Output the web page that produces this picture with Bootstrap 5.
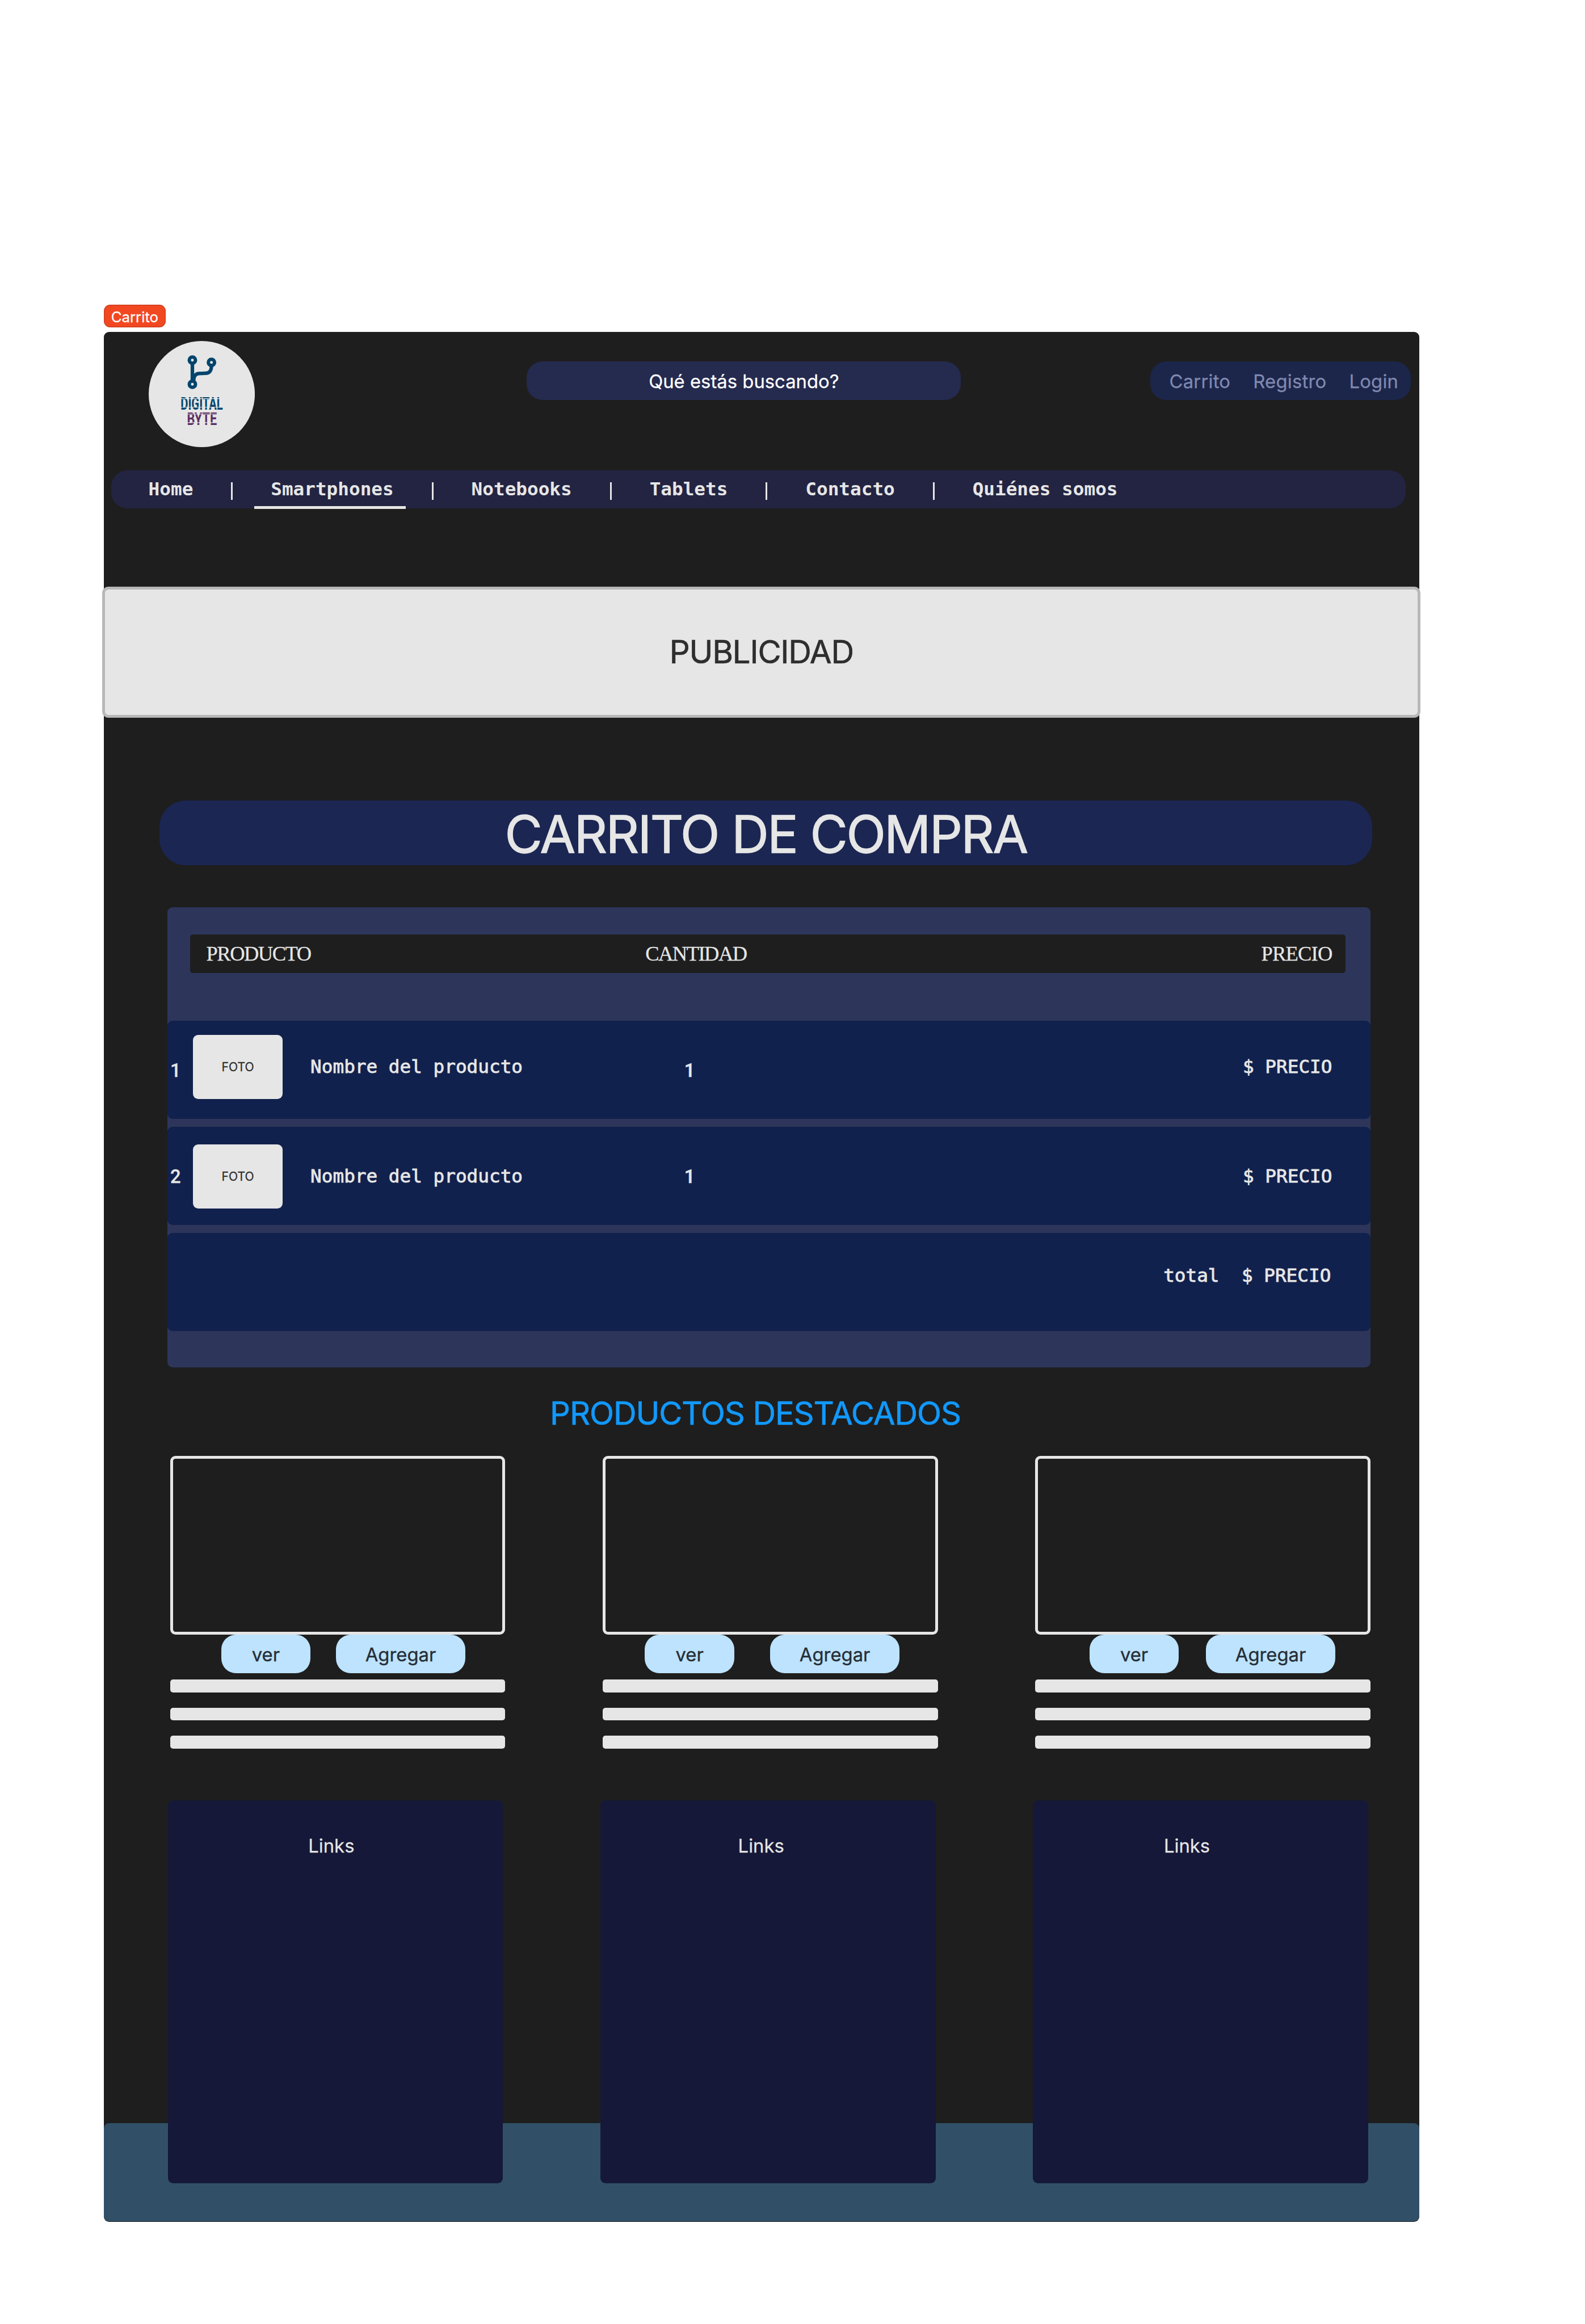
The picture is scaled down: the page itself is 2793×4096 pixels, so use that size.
<!DOCTYPE html>
<html lang="es">
<head>
<meta charset="utf-8">
<title>Carrito</title>
<link rel="stylesheet" href="https://cdn.jsdelivr.net/npm/bootstrap@5.3.0/dist/css/bootstrap.min.css">
<style>
html { font-size: 7.0325px; }
body { font-family: Inter, sans-serif; font-size: 4.667rem; line-height: 1; background: #fff; color: #e6e6e6; overflow: hidden; white-space: nowrap; -webkit-text-stroke: .008em currentColor; }
.mono { font-family: "DejaVu Sans Mono", monospace; font-size: 4.65rem; -webkit-text-stroke: .026em currentColor; white-space: pre; }
.page { padding: 76.4rem 0 0 26rem; }
.frame-tag { width: 15.5rem; height: 5.6rem; font-size: 3.667rem; padding-top: .6rem; border-radius: 1.6rem; background: #f24822; color: #fff; box-shadow: inset 0 0 0 .2rem rgba(0,0,0,.14); margin-bottom: 1.2rem; }
.frame { width: 329.6rem; height: 473.6rem; border-radius: 1.3rem; background: #1e1e1e; }
.topbar { height: 34.65rem; padding: 2.2rem 2.1rem 0 11.2rem; }
.logo { width: 26.6rem; height: 26.6rem; -webkit-text-stroke: 0; }
.pill { height: 9.6rem; border-radius: 4rem; margin-top: 5.2rem; }
.search { width: 108.8rem; margin-left: 68.2rem; padding-top: .3rem; background: #252a4f; color: #fff; }
.account { width: 65.2rem; background: #1c264b; color: #8089b0; padding: .3rem 3.1rem 0 4.7rem; letter-spacing: .03rem; }
.mainnav { height: 9.6rem; margin: 0 3.4rem 0 1.8rem; padding-left: 9.4rem; border-radius: 4rem; background: #232442; }
.mainnav .mono { font-weight: 700; -webkit-text-stroke: 0; }
.mainnav i { width: .45rem; height: 4.4rem; margin: .8rem 9.51rem 0; background: #e6e6e6; }
.current::after { content: ""; position: absolute; left: -4.2rem; right: -3rem; bottom: -2.6rem; height: .8rem; background: #e6e6e6; }
.promo { height: 32.8rem; margin: 19.6rem -.35rem 0; border: .75rem solid #b8b8b8; border-radius: 1.6rem; background: #e6e6e6; color: #2e2e2e; font-size: 8rem; letter-spacing: -.165rem; -webkit-text-stroke: .012em currentColor; }
.cart-title { width: 304rem; height: 16.2rem; margin: 20.8rem 0 0 13.9rem; padding-top: .8rem; border-radius: 6.6rem; background: #1b2653; font-size: 12.9rem; letter-spacing: -.34rem; -webkit-text-stroke: .014em currentColor; }
.cart { width: 301.4rem; height: 115.2rem; margin: 10.6rem 0 0 16rem; padding-top: 6.8rem; border-radius: 1.3rem; background: #2d365a; }
.cart-head { height: 9.6rem; margin: 0 6.2rem 12rem 5.6rem; padding: 0 3.4rem 0 4.1rem; border-radius: .7rem; background: #1e1e1e; font-family: "Liberation Serif", serif; font-size: 5.2rem; letter-spacing: -.22rem; }
.cart-head .c1 { width: 110rem; }
.cart-head .c3 { letter-spacing: -.12rem; }
.cart-row { height: 24.6rem; margin-bottom: 2rem; padding-right: 9.6rem; border-radius: 1.3rem; background: #11214d; }
.num { font-family: Roboto, sans-serif; font-weight: 500; text-align: center; margin-top: .5rem; }
.idx { width: 4rem; }
.photo { width: 22.4rem; height: 16rem; margin-left: 2.4rem; border-radius: 1.3rem; background: #e6e6e6; color: #2e2e2e; font-size: 3rem; -webkit-text-stroke: .014em currentColor; }
.pname { width: 80rem; margin-left: 7rem; }
.qty { width: 30rem; font-weight: 600; }
.up { margin-bottom: 1.4rem; }
.down { margin-top: .2rem; }
.total { padding-top: 8.4rem; padding-right: 9.9rem; }
.featured { margin: 7.55rem 0 0 111.8rem; height: 8rem; line-height: 8rem; font-size: 8rem; letter-spacing: -.155rem; -webkit-text-stroke: .012em currentColor; color: #19f; }
.grid3 { gap: 24.4rem; }
.products { margin: 6.75rem 0 0 16.6rem; }
.product { width: 84rem; }
.shot { height: 44.8rem; border: .8rem solid #e6e6e6; border-radius: 1.3rem; }
.actions { height: 9.6rem; padding-left: 12.8rem; gap: 6.4rem; margin-bottom: 1.6rem; }
.p2 .actions { padding-left: 10.6rem; gap: 9rem; }
.p3 .actions { padding-left: 13.6rem; gap: 6.8rem; }
.actions .btn { height: 9.6rem; border: 0; border-radius: 3.7rem; background: #bde3ff; color: #262e36; font-size: 4.667rem; line-height: 1; padding: .2rem 0 0; -webkit-text-stroke: .012em currentColor; }
.see { width: 22.4rem; }
.add { width: 32.4rem; }
.line { height: 3.2rem; margin-bottom: 3.85rem; border-radius: .7rem; background: #e6e6e6; }
.links { margin: 9.05rem 0 0 16.05rem; position: relative; z-index: 1; }
.panel { width: 84rem; height: 96rem; border-radius: 1.3rem; background: #151838; padding-top: 9.1rem; }
.panel:nth-child(1) { padding-left: 35.2rem; }
.panel:nth-child(2) { padding-left: 34.5rem; }
.panel:nth-child(3) { padding-left: 32.8rem; }
.foot { height: 24.6rem; margin-top: -15rem; border-radius: 1.3rem; background: #315067; }
</style>
<script src="https://cdn.jsdelivr.net/npm/bootstrap@5.3.0/dist/js/bootstrap.bundle.min.js"></script>
</head>
<body>
<div class="page">
  <div class="frame-tag d-flex align-items-center justify-content-center">Carrito</div>
  <div class="frame">
    <header class="topbar d-flex">
      <svg class="logo" viewBox="372 854 266 266">
        <circle cx="505" cy="987" r="133" fill="#e6e6e6"/>
        <g fill="none" stroke="#03446c">
          <g stroke-width="9"><path d="M481.500 910V955M529.300 916C529 930 524 934.500 514 935L497 935.700C488 937 485 943 484.500 955"/></g>
          <g stroke-width="8.500"><circle cx="481.500" cy="902" r="7.800"/><circle cx="529.300" cy="907.700" r="7.800"/><circle cx="481.500" cy="962.500" r="7.800"/></g>
        </g>
        <g font-family="Roboto" font-weight="700" font-size="45.500">
          <text x="452" y="1025.700" textLength="106" lengthAdjust="spacingAndGlyphs" fill="#03446c">DIGITAL</text>
          <text x="468" y="1064" textLength="75" lengthAdjust="spacingAndGlyphs" fill="#5a2e62">BYTE</text>
        </g>
        <path d="M450 998.500H560M450 1020H560M465 1037H545M465 1058.500H545" stroke="#e6e6e6" stroke-width="1.600"/>
      </svg>
      <div class="pill search d-flex align-items-center justify-content-center">Qué estás buscando?</div>
      <nav class="pill account d-flex align-items-center justify-content-between ms-auto"><span>Carrito</span><span>Registro</span><span>Login</span></nav>
    </header>
    <nav class="mainnav d-flex align-items-center">
      <span class="mono">Home</span><i></i><span class="mono current position-relative">Smartphones</span><i></i><span class="mono">Notebooks</span><i></i><span class="mono">Tablets</span><i></i><span class="mono">Contacto</span><i></i><span class="mono">Quiénes somos</span>
    </nav>
    <div class="promo d-flex align-items-center justify-content-center">PUBLICIDAD</div>
    <div class="cart-title d-flex align-items-center justify-content-center">CARRITO DE COMPRA</div>
    <section class="cart">
      <div class="cart-head d-flex align-items-center"><div class="c1">PRODUCTO</div><span>CANTIDAD</span><span class="c3 ms-auto">PRECIO</span></div>
      <div class="cart-row d-flex align-items-center">
        <div class="idx num">1</div>
        <div class="photo up d-flex align-items-center justify-content-center">FOTO</div>
        <div class="pname up mono">Nombre del producto</div>
        <div class="qty num">1</div>
        <div class="up mono ms-auto">$ PRECIO</div>
      </div>
      <div class="cart-row d-flex align-items-center">
        <div class="idx num">2</div>
        <div class="photo down d-flex align-items-center justify-content-center">FOTO</div>
        <div class="pname down mono">Nombre del producto</div>
        <div class="qty num">1</div>
        <div class="down mono ms-auto">$ PRECIO</div>
      </div>
      <div class="cart-row total d-flex justify-content-end"><div class="mono">total  $ PRECIO</div></div>
    </section>
    <div class="featured">PRODUCTOS DESTACADOS</div>
    <section class="products grid3 d-flex">
      <article class="product"><div class="shot"></div><div class="actions d-flex"><button class="btn see">ver</button><button class="btn add">Agregar</button></div><div class="line"></div><div class="line"></div><div class="line"></div></article>
      <article class="product p2"><div class="shot"></div><div class="actions d-flex"><button class="btn see">ver</button><button class="btn add">Agregar</button></div><div class="line"></div><div class="line"></div><div class="line"></div></article>
      <article class="product p3"><div class="shot"></div><div class="actions d-flex"><button class="btn see">ver</button><button class="btn add">Agregar</button></div><div class="line"></div><div class="line"></div><div class="line"></div></article>
    </section>
    <section class="links grid3 d-flex">
      <div class="panel">Links</div><div class="panel">Links</div><div class="panel">Links</div>
    </section>
    <footer class="foot"></footer>
  </div>
</div>
</body>
</html>
